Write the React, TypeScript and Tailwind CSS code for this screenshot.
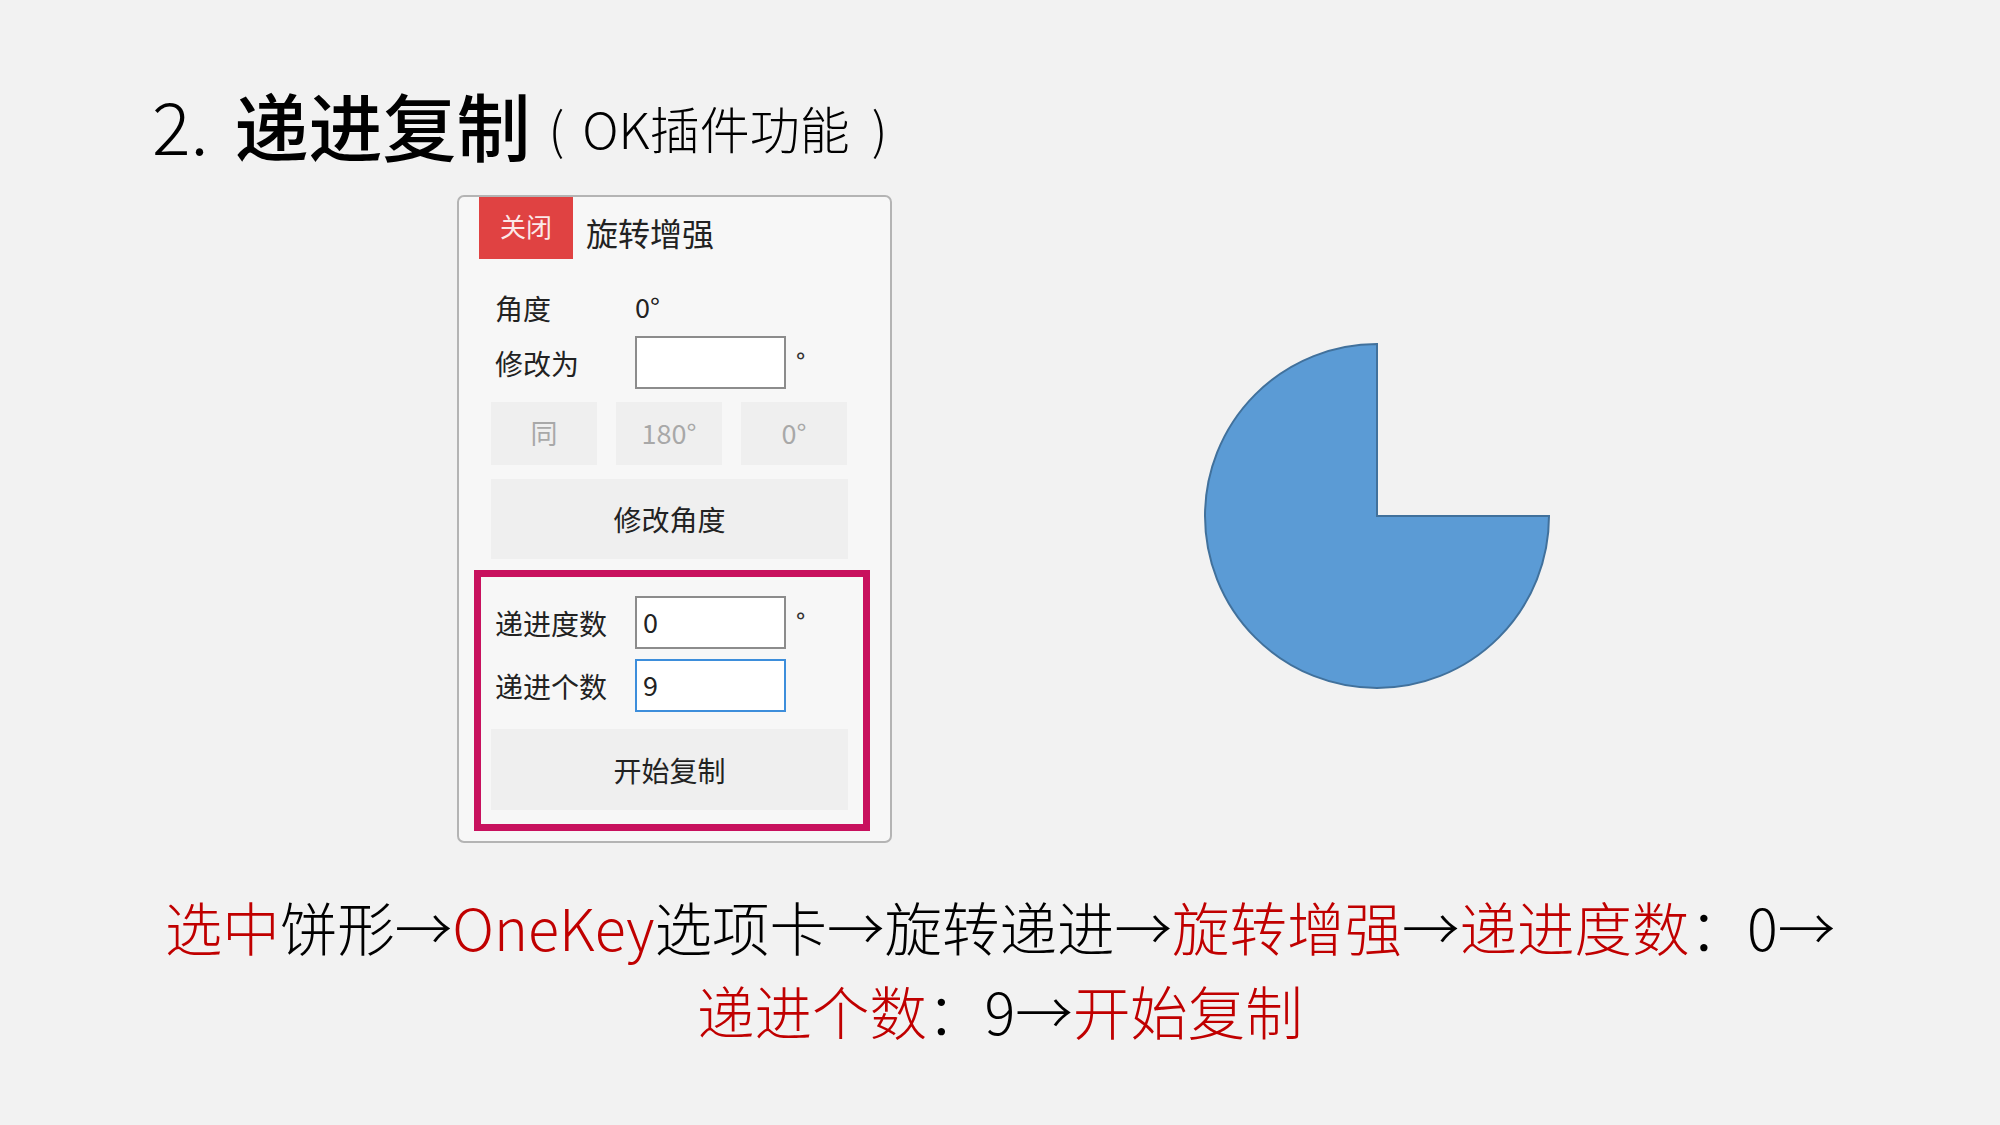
const cjk = "font-['Noto_Sans_CJK_SC','Noto_Sans',sans-serif]";

function DegreeMark() {
  return <span className="ml-[10px] self-start mt-[7px] text-[24px] font-medium text-[#333]">°</span>;
}

function Field({ label, value, active }: { label: string; value?: string; active?: boolean }) {
  return (
    <div className="flex items-center h-[53px]">
      <span className="w-[140px] text-[28px] text-[#222]">{label}</span>
      <div
        className={
          active
            ? "w-[151px] h-[53px] bg-white border-2 border-[#3d8edb] flex items-center px-[6px] text-[27px] text-[#222]"
            : "w-[151px] h-[53px] bg-white border-2 border-[#8c8c8c] flex items-center px-[6px] text-[27px] text-[#222]"
        }
      >
        {value}
      </div>
      {!active && <DegreeMark />}
    </div>
  );
}

function Panel() {
  return (
    <div className="w-[435px] h-[648px] bg-[#f7f7f7] border-2 border-[#b4b4b4] rounded-[7px] flex flex-col">
      <div className="flex items-center h-[62px] pl-[20px]">
        <div className="w-[94px] h-[62px] bg-[#e04242] text-[#fbe9e9] text-[26px] flex items-center justify-center pb-[6px]">
          关闭
        </div>
        <span className="ml-[13px] text-[32px] text-[#222] mt-[8px]">旋转增强</span>
      </div>

      <div className="pl-[36px] flex flex-col">
        <div className="flex items-center h-[57px] mt-[20px]">
          <span className="w-[140px] text-[28px] text-[#222]">角度</span>
          <span className="text-[27px] text-[#222]">0°</span>
        </div>
        <Field label="修改为" />
      </div>

      <div className="pl-[32px] flex gap-[19px] mt-[13px]">
        {["同", "180°", "0°"].map((t) => (
          <div key={t} className="w-[106px] h-[63px] bg-[#efefef] flex items-center justify-center text-[27px] text-[#a8a8a8]">
            {t}
          </div>
        ))}
      </div>

      <div className="ml-[32px] mt-[14px] w-[357px] h-[80px] bg-[#efefef] flex items-center justify-center text-[28px] text-[#222]">
        修改角度
      </div>

      <div className="ml-[15px] mt-[11px] w-[396px] h-[261px] border-[7px] border-[#c8115e] flex flex-col">
        <div className="pl-[14px] pt-[19px] flex flex-col gap-[10px]">
          <Field label="递进度数" value="0" />
          <Field label="递进个数" value="9" active />
        </div>
        <div className="ml-[10px] mt-[17px] w-[357px] h-[81px] bg-[#efefef] flex items-center justify-center text-[28px] text-[#222]">
          开始复制
        </div>
      </div>
    </div>
  );
}

function Pie() {
  const cx = 174;
  const cy = 174;
  const r = 172;
  return (
    <svg width="348" height="348" viewBox="0 0 348 348">
      <path
        d={`M ${cx} ${cy} L ${cx} ${cy - r} A ${r} ${r} 0 1 0 ${cx + r} ${cy} Z`}
        fill="#5b9bd5"
        stroke="#41719c"
        strokeWidth="2"
      />
    </svg>
  );
}

export default function App() {
  return (
    <div className={`w-[2000px] h-[1125px] bg-[#f2f2f2] flex flex-col ${cjk}`}>
      <div className="pt-[79px] pl-[152px] h-[169px] flex items-center text-black">
        <span className="text-[72px] font-light leading-[90px]">2.</span>
        <span className="text-[74px] font-medium leading-[90px] ml-[26px]">递进复制</span>
        <span className="text-[50px] font-light leading-[90px] ml-[18px] mt-[6px]">(</span>
        <span className="text-[50px] font-light leading-[90px] ml-[18px] mt-[6px]">OK插件功能</span>
        <span className="text-[50px] font-light leading-[90px] ml-[22px] mt-[6px]">)</span>
      </div>

      <div className="flex mt-[26px]">
        <div className="ml-[457px]">
          <Panel />
        </div>
        <div className="ml-[311px] mt-[147px]">
          <Pie />
        </div>
      </div>

      <div className="mt-[41px] text-center text-[57.5px] leading-[84px] font-light text-black">
        <div>
          <span className="text-[#c00000]">选中</span>饼形→<span className="text-[#c00000]">OneKey</span>选项卡→旋转递进→
          <span className="text-[#c00000]">旋转增强</span>→<span className="text-[#c00000]">递进度数</span>：0→
        </div>
        <div>
          <span className="text-[#c00000]">递进个数</span>：9→<span className="text-[#c00000]">开始复制</span>
        </div>
      </div>
    </div>
  );
}
